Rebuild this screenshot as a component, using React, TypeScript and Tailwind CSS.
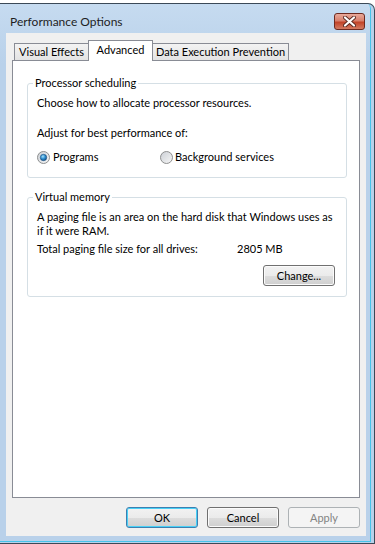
import React from 'react';

function Radio({ checked }: { checked?: boolean }) {
    return (
        <svg width="13" height="13" viewBox="0 0 13 13" className="shrink-0">
            <defs>
                <linearGradient id={checked ? 'rgOn' : 'rgOff'} x1="0" y1="0" x2="1" y2="1">
                    <stop offset="0" stopColor="#cbcfd5" />
                    <stop offset="1" stopColor="#f7f7f7" />
                </linearGradient>
                <radialGradient id="dot" cx="0.4" cy="0.35" r="0.7">
                    <stop offset="0" stopColor="#a6e2fb" />
                    <stop offset="0.5" stopColor="#2f8fd0" />
                    <stop offset="1" stopColor="#104c84" />
                </radialGradient>
            </defs>
            <circle cx="6.5" cy="6.5" r="6" fill={`url(#${checked ? 'rgOn' : 'rgOff'})`} stroke="#8e8f8f" />
            {checked && <circle cx="6.5" cy="6.5" r="3.2" fill="url(#dot)" stroke="#1b4f7e" strokeWidth="0.6" />}
        </svg>
    );
}

function Btn({ label, variant }: { label: string; variant?: 'default' | 'disabled' }) {
    if (variant === 'disabled') {
        return (
            <div className="w-[72px] h-[21px] flex items-center justify-center rounded-[3px] border border-[#adb2b5] bg-[#f4f4f4] text-[#838383]">
                {label}
            </div>
        );
    }
    return (
        <div
            className={`w-[72px] h-[21px] flex items-center justify-center rounded-[3px] border text-black bg-[linear-gradient(#f2f2f2_0%,#ebebeb_50%,#dddddd_51%,#cfcfcf_100%)] ${
                variant === 'default'
                    ? 'border-[#3c7fb1] shadow-[inset_0_0_0_1px_#48d0f6]'
                    : 'border-[#707070] shadow-[inset_0_0_0_1px_#fbfbfb]'
            }`}
        >
            {label}
        </div>
    );
}

export default function App() {
    return (
        <div className="w-[375px] h-[544px] bg-white overflow-hidden whitespace-nowrap text-[11px] leading-[16px] text-black font-['Lato',sans-serif]">
            <div className="mt-[3px] ml-[-1px] w-[376px] h-[541px] rounded-tr-[7px] border-t border-r border-b border-[#3b4957] bg-[linear-gradient(#c6dbf0,#b9d1ea_60px)] shadow-[inset_-3px_-1px_0_#b9d1ea,inset_-4px_-2px_0_#46c3ea] flex flex-col">
                <div className="h-[29px] flex items-start justify-between">
                    <div className="pl-[11px] pt-[10px] text-[12px] text-[#1e1e1e]">Performance Options</div>
                    <div className="mt-[9px] mr-[9px] w-[31px] h-[17px] rounded-[3px] border border-[#6d2a20] bg-[linear-gradient(#e9a99a,#d8806d_45%,#c24429_55%,#d37b63)] flex items-center justify-center">
                        <svg width="13" height="11" viewBox="0 0 13 11">
                            <path d="M2 1.5 L11 9.5 M11 1.5 L2 9.5" stroke="#5a2a22" strokeWidth="4" strokeLinecap="round" />
                            <path d="M2 1.5 L11 9.5 M11 1.5 L2 9.5" stroke="#ffffff" strokeWidth="2.2" strokeLinecap="round" />
                        </svg>
                    </div>
                </div>

                <div className="ml-[7px] w-[360px] h-[503px] bg-[#f0f0f0] flex flex-col">
                    <div className="h-[27px] pl-[8px] flex items-end">
                        <div className="w-[75px] h-[17px] flex items-center justify-center border border-b-0 border-[#898c95] bg-[linear-gradient(#f3f3f3,#e3e3e3)]">
                            Visual Effects
                        </div>
                        <div className="relative z-10 ml-[-1px] mb-[-1px] w-[65px] h-[21px] flex items-start pt-[1px] justify-center border border-b-0 border-[#898c95] bg-white">
                            Advanced
                        </div>
                        <div className="ml-[-1px] w-[137px] h-[17px] flex items-center justify-center border border-b-0 border-[#898c95] bg-[linear-gradient(#f3f3f3,#e3e3e3)]">
                            Data Execution Prevention
                        </div>
                    </div>

                    <div className="ml-[6px] w-[348px] h-[438px] border border-[#898c95] bg-white pt-[14px] pl-[14px]">
                        <fieldset className="min-w-0 w-[320px] h-[103px] border border-[#d5dfe5] rounded-[3px]">
                            <legend className="ml-[5px] px-[2px]">Processor scheduling</legend>
                            <div className="pl-[9px] pt-[4px]">
                                <div>Choose how to allocate processor resources.</div>
                                <div className="mt-[14px]">Adjust for best performance of:</div>
                                <div className="mt-[8px] flex items-center">
                                    <div className="w-[123px] flex items-center gap-[3px]">
                                        <Radio checked />
                                        <span>Programs</span>
                                    </div>
                                    <div className="flex items-center gap-[2px]">
                                        <Radio />
                                        <span>Background services</span>
                                    </div>
                                </div>
                            </div>
                        </fieldset>

                        <fieldset className="min-w-0 mt-[11px] w-[320px] h-[108px] border border-[#d5dfe5] rounded-[3px]">
                            <legend className="ml-[5px] px-[2px]">Virtual memory</legend>
                            <div className="pl-[9px] pt-[5px] pr-[11px] leading-[14px]">
                                <div>
                                    A paging file is an area on the hard disk that Windows uses as
                                    <br />
                                    if it were RAM.
                                </div>
                                <div className="mt-[4px] flex">
                                    <div className="w-[200px]">Total paging file size for all drives:</div>
                                    <div>2805 MB</div>
                                </div>
                                <div className="mt-[9px] flex justify-end">
                                    <Btn label="Change..." />
                                </div>
                            </div>
                        </fieldset>
                    </div>

                    <div className="mt-[9px] pr-[6px] flex justify-end gap-[9px]">
                        <Btn label="OK" variant="default" />
                        <Btn label="Cancel" />
                        <Btn label="Apply" variant="disabled" />
                    </div>
                </div>
            </div>
        </div>
    );
}
